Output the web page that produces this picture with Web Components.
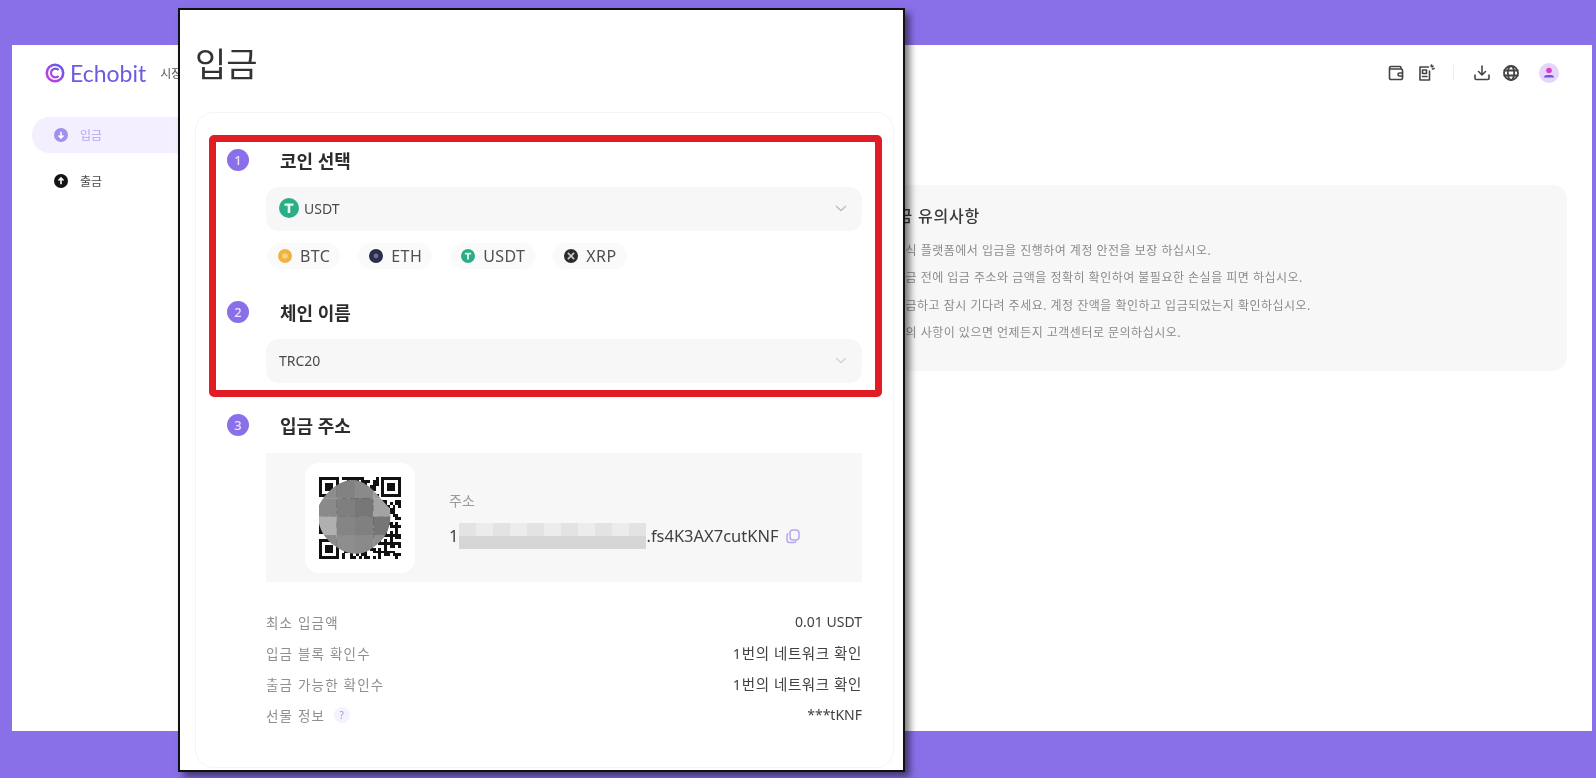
<!DOCTYPE html>
<html lang="ko">
<head>
<meta charset="utf-8">
<title>입금</title>
<style>
html, body { margin: 0; height: 100%; }
body {
	background: #8a70e8;
	font-family: "Noto Sans", "Noto Sans CJK KR", sans-serif;
	overflow: hidden;
}
</style>
</head>
<body>

<echo-page>
	<echo-header slot="header"></echo-header>
	<echo-side slot="side">
		<side-item active label="입금"></side-item>
		<side-item label="출금"></side-item>
	</echo-side>
	<notice-panel slot="main">
		<li>공식 플랫폼에서 입금을 진행하여 계정 안전을 보장 하십시오.</li>
		<li>입금 전에 입금 주소와 금액을 정확히 확인하여 불필요한 손실을 피면 하십시오.</li>
		<li>입금하고 잠시 기다려 주세요. 계정 잔액을 확인하고 입금되었는지 확인하십시오.</li>
		<li>문의 사항이 있으면 언제든지 고객센터로 문의하십시오.</li>
	</notice-panel>
</echo-page>

<deposit-window>
	<step-head num="1">코인 선택</step-head>
	<select-box arrow="#bdbdbd"><coin-icon coin="usdt" size="20"></coin-icon><span>USDT</span></select-box>
	<chip-row>
		<coin-chip coin="btc">BTC</coin-chip>
		<coin-chip coin="eth">ETH</coin-chip>
		<coin-chip coin="usdt">USDT</coin-chip>
		<coin-chip coin="xrp">XRP</coin-chip>
	</chip-row>
	<step-head num="2" style="margin-top:29px">체인 이름</step-head>
	<select-box arrow="#d4d4d4"><span>TRC20</span></select-box>
	<step-head num="3" style="margin-top:28px">입금 주소</step-head>
	<address-panel></address-panel>
	<info-list>
		<info-row label="최소 입금액">0.01 USDT</info-row>
		<info-row label="입금 블록 확인수" wide>1번의 네트워크 확인</info-row>
		<info-row label="출금 가능한 확인수" wide>1번의 네트워크 확인</info-row>
		<info-row label="선물 정보" hint>***tKNF</info-row>
	</info-list>
</deposit-window>

<script>
// page behind the window
class EchoPage extends HTMLElement {
	constructor() {
		super();
		this.attachShadow({mode: 'open'});
		this.shadowRoot.innerHTML = `
<style>
:host { display: block; box-sizing: border-box; height: 778px; padding: 45px 4px 47px 12px; }
.sheet { background: #fff; height: 100%; display: flex; flex-direction: column; filter: blur(.45px); }
.body { display: flex; flex: 1; }
.side { width: 858px; padding: 16px 0 0 20px; box-sizing: border-box; }
.main { flex: 1; padding: 84px 25px 0 0; }
</style>
<div class="sheet">
	<slot name="header"></slot>
	<div class="body">
		<div class="side"><slot name="side"></slot></div>
		<div class="main"><slot name="main"></slot></div>
	</div>
</div>`;
	}
}

class EchoHeader extends HTMLElement {
	constructor() {
		super();
		this.attachShadow({mode: 'open'});
		this.shadowRoot.innerHTML = `
<style>
:host { display: flex; align-items: center; height: 56px; padding: 0 33px; color: #555; }
.logo { display: flex; align-items: center; gap: 5px; color: #6a5be2; font: 400 23px/1 Lato, sans-serif; }
.nav { margin-left: 14px; font-size: 12px; }
.tools { margin-left: auto; display: flex; align-items: center; }
svg { display: block; }
.sep { width: 1px; height: 16px; background: #eee; margin: 0 19px 0 18px; }
.ico { fill: none; stroke: #444; stroke-width: 1.6; stroke-linecap: round; stroke-linejoin: round; }
</style>
<div class="logo">
	<svg width="20" height="20" viewBox="0 0 20 20">
		<defs><linearGradient id="lg" x1="0" y1="1" x2="1" y2="0"><stop offset="0" stop-color="#c93fe0"/><stop offset="1" stop-color="#5d5be6"/></linearGradient></defs>
		<circle cx="10" cy="10" r="8.2" fill="none" stroke="url(#lg)" stroke-width="2.6"/>
		<path d="M13.6 7A4.4 4.4 0 1 0 13.6 13" fill="none" stroke="url(#lg)" stroke-width="2.2"/>
		<path d="M7.6 10H14" stroke="url(#lg)" stroke-width="2"/>
	</svg>
	<span>Echobit</span>
</div>
<span class="nav">시장</span>
<div class="tools">
	<svg class="ico" width="18" height="18" viewBox="0 0 18 18" style="margin-right:12px"><path d="M14 5V4a1.5 1.5 0 0 0-1.500-1.500H4A1.800 1.800 0 0 0 2.500 4.500v9.500A1.500 1.500 0 0 0 4 15.500h10a1.500 1.500 0 0 0 1.500-1.500V6.500A1.500 1.500 0 0 0 14 5H2.800"/><path d="M15.500 9h-3a1.500 1.500 0 0 0 0 3h3"/></svg>
	<svg class="ico" width="18" height="18" viewBox="0 0 18 18"><path d="M11.500 3H3v13h9.500V7"/><rect x="5.500" y="6" width="4" height="3.500"/><path d="M5.500 12.500h4.500"/><path d="M14 2l.5-1M15.500 5l1.500-.6M15 3l1-1"/></svg>
	<span class="sep"></span>
	<svg class="ico" width="18" height="18" viewBox="0 0 18 18" style="margin-right:11px"><path d="M9 2v9M5.500 7.500 9 11l3.500-3.500M2 11v3.500a1 1 0 0 0 1 1h12a1 1 0 0 0 1-1V11"/></svg>
	<svg class="ico" width="18" height="18" viewBox="0 0 18 18" style="margin-right:19px;stroke-width:1.800"><circle cx="9" cy="9" r="7"/><ellipse cx="9" cy="9" rx="3.200" ry="7"/><path d="M2.300 6.500h13.400M2.300 11.500h13.400"/></svg>
	<svg width="20" height="20" viewBox="0 0 20 20"><circle cx="10" cy="10" r="10" fill="#e6d4fb"/><circle cx="10" cy="7.500" r="2.800" fill="#d63fc4"/><path d="M5 14.500a3 2.500 0 0 1 3-2.500h4a3 2.500 0 0 1 3 2.500z" fill="#6a58dd"/></svg>
</div>`;
	}
}

class EchoSide extends HTMLElement {
	constructor() {
		super();
		this.attachShadow({mode: 'open'});
		this.shadowRoot.innerHTML = `
<style>:host { display: flex; flex-direction: column; gap: 10px; width: 200px; }</style>
<slot></slot>`;
	}
}

class SideItem extends HTMLElement {
	constructor() {
		super();
		this.attachShadow({mode: 'open'});
		let on = this.hasAttribute('active');
		let arrow = on ? 'M7 3.800v6M4.500 7.500 7 10l2.500-2.500' : 'M7 10.200v-6M4.500 6.500 7 4l2.500 2.500';
		this.shadowRoot.innerHTML = `
<style>
:host { display: flex; align-items: center; height: 36px; padding-left: 22px; gap: 12px; border-radius: 18px; font-size: 12px; color: #4a4a4a; }
:host([active]) { background: #f3effe; color: #b7a4f3; }
svg { display: block; }
</style>
<svg width="14" height="14" viewBox="0 0 14 14"><circle cx="7" cy="7" r="7" fill="${on ? '#a48ef0' : '#141414'}"/><path d="${arrow}" fill="none" stroke="#fff" stroke-width="1.600"/></svg>
<span>${this.getAttribute('label')}</span>`;
	}
}

class NoticePanel extends HTMLElement {
	constructor() {
		super();
		this.attachShadow({mode: 'open'});
		this.shadowRoot.innerHTML = `
<style>
:host { display: block; box-sizing: border-box; height: 186px; padding: 19px 24px; background: #f7f7f8; border-radius: 14px; }
h3 { margin: 0 0 9px -12px; font-size: 16px; letter-spacing: .8px; font-weight: 500; line-height: 24px; color: #3a3a3a; }
::slotted(li) { list-style: none; font-size: 12px; letter-spacing: .49px; line-height: 27.300px; color: #8b8b8b; white-space: nowrap; }
</style>
<h3>입금 유의사항</h3>
<slot></slot>`;
	}
}

// the screenshot pasted over the page
class DepositWindow extends HTMLElement {
	constructor() {
		super();
		this.attachShadow({mode: 'open'});
		this.shadowRoot.innerHTML = `
<style>
:host { position: absolute; left: 178px; top: 8px; width: 727px; height: 764px; box-sizing: border-box; background: #fff; border: 2px solid #111; box-shadow: 5px 5px 7px rgba(0,0,0,.5); overflow: hidden; }
.inner { padding: 0 9px 0 15px; filter: blur(.45px); }
h1 { margin: 0; height: 102px; box-sizing: border-box; padding-top: 27px; font-size: 34px; font-weight: 400; line-height: 54px; color: #333; }
.card { position: relative; box-sizing: border-box; height: 656px; padding: 33px 31px 0 31px; border: 1px solid #f4f4f4; border-radius: 18px; }
.mark { position: absolute; left: 13px; top: 22px; width: 673px; height: 262px; box-sizing: border-box; border: 7px solid #e21c24; border-radius: 5px; pointer-events: none; }
</style>
<div class="inner">
<h1>입금</h1>
<div class="card">
	<slot></slot>
	<div class="mark"></div>
</div>
</div>`;
	}
}

class StepHead extends HTMLElement {
	constructor() {
		super();
		this.attachShadow({mode: 'open'});
		this.shadowRoot.innerHTML = `
<style>
:host { display: flex; align-items: center; gap: 31px; height: 28px; font-size: 18px; font-weight: 700; color: #2c2c2c; }
b { display: flex; align-items: center; justify-content: center; width: 22px; height: 22px; border-radius: 50%; background: #8a70e8; color: #e9e3fd; font-size: 13px; font-weight: 500; }
</style>
<b>${this.getAttribute('num')}</b><span><slot></slot></span>`;
	}
}

class SelectBox extends HTMLElement {
	constructor() {
		super();
		this.attachShadow({mode: 'open'});
		let color = this.getAttribute('arrow');
		this.shadowRoot.innerHTML = `
<style>
:host { display: flex; align-items: center; gap: 5px; height: 44px; margin: 13px 0 0 39px; padding: 0 15px 2px 13px; box-sizing: border-box; background: #f7f7f7; border-radius: 13px; font-size: 14px; color: #4a4a4a; }
svg { margin-left: auto; display: block; }
</style>
<slot></slot>
<svg width="12" height="7" viewBox="0 0 12 7"><path d="M1 1l5 4.500L11 1" fill="none" stroke="${color}" stroke-width="1.400"/></svg>`;
	}
}

class ChipRow extends HTMLElement {
	constructor() {
		super();
		this.attachShadow({mode: 'open'});
		this.shadowRoot.innerHTML = `
<style>:host { display: flex; gap: 18px; margin: 12px 0 0 40px; }</style>
<slot></slot>`;
	}
}

const COINS = {
	usdt: '<circle cx="10" cy="10" r="10" fill="#2bae87"/><path d="M5.500 5.500h9v2.300h-3.200V15H8.700V7.800H5.500z" fill="#e9f7f2"/>',
	btc: '<circle cx="10" cy="10" r="10" fill="#efb33e"/><circle cx="10" cy="10" r="4" fill="#f7d48a"/>',
	eth: '<circle cx="10" cy="10" r="10" fill="#2c2c4c"/><circle cx="10" cy="10" r="3.500" fill="#6e6e94"/>',
	xrp: '<circle cx="10" cy="10" r="10" fill="#2b2b2b"/><path d="M5.500 5.500l9 9M14.500 5.500l-9 9" stroke="#c9c9c9" stroke-width="2.400"/>'
};

class CoinIcon extends HTMLElement {
	constructor() {
		super();
		this.attachShadow({mode: 'open'});
		let size = this.getAttribute('size') || 14;
		this.shadowRoot.innerHTML = `
<style>:host { display: block; flex: none; } svg { display: block; }</style>
<svg width="${size}" height="${size}" viewBox="0 0 20 20">${COINS[this.getAttribute('coin')]}</svg>`;
	}
}

class CoinChip extends HTMLElement {
	constructor() {
		super();
		this.attachShadow({mode: 'open'});
		this.shadowRoot.innerHTML = `
<style>
:host { display: flex; align-items: center; gap: 8px; height: 26px; padding: 0 10px 0 11px; border-radius: 13px; background: #fafafa; font-size: 16px; letter-spacing: .4px; color: #4f4f4f; }
</style>
<coin-icon coin="${this.getAttribute('coin')}" size="14"></coin-icon><slot></slot>`;
	}
}

class AddressPanel extends HTMLElement {
	constructor() {
		super();
		this.attachShadow({mode: 'open'});
		this.shadowRoot.innerHTML = `
<style>
:host { display: flex; align-items: center; height: 129px; margin: 14px 0 0 39px; padding-left: 39px; background: #f7f7f7; }
.qr { width: 110px; height: 110px; background: #fff; border-radius: 14px; display: flex; align-items: center; justify-content: center; flex: none; }
svg { display: block; }
.txt { margin-left: 34px; padding-top: 5px; }
.cap { font-size: 14px; color: #9a9a9a; line-height: 18px; }
.addr { display: flex; align-items: center; margin-top: 13px; font-size: 16.500px; color: #3f3f3f; line-height: 26px; }
.smear { display: grid; grid-template-columns: repeat(11, 17px); grid-auto-rows: 13px; margin: 0 0 0 1px; }
.smear i:nth-child(odd) { background: #e3e3e3; }
.smear i:nth-child(even) { background: #ececec; }
.smear i.d { background: #d6d6d6; }
.copy { margin-left: 6px; }
</style>
<div class="qr">${this.qrSvg()}</div>
<div class="txt">
	<div class="cap">주소</div>
	<div class="addr">
		<span>1</span>
		<div class="smear">${this.smear()}</div>
		<span>.fs4K3AX7cutKNF</span>
		<svg class="copy" width="16" height="16" viewBox="0 0 16 16" fill="none" stroke="#b9a6ee" stroke-width="1.500"><rect x="5" y="2" width="9" height="10" rx="3"/><path d="M3.500 5.500A2 2 0 0 0 2 7.500V12a2.500 2.500 0 0 0 2.500 2.500H9a2 2 0 0 0 2-1.500"/></svg>
	</div>
</div>`;
	}

	smear() {
		let cells = '';
		for (let i = 0; i < 22; i++) cells += '<i' + (i > 10 ? ' class="d"' : '') + '></i>';
		return cells;
	}

	// qr modules from a small fixed sequence, the center is hidden by the mosaic anyway
	qrSvg() {
		let n = 29, m = 82 / n, out = '', seed = 17;
		let finder = (x, y) => `<path d="M${x} ${y}h7v7h-7z M${x + 1} ${y + 1}v5h5v-5z" fill-rule="evenodd"/><rect x="${x + 2}" y="${y + 2}" width="3" height="3"/>`;
		for (let y = 0; y < n; y++) {
			for (let x = 0; x < n; x++) {
				seed = (seed * 73 + 41) % 1021;
				let corner = (x < 8 && y < 8) || (x > n - 9 && y < 8) || (x < 8 && y > n - 9);
				if (!corner && seed % 2) out += `<rect x="${x}" y="${y}" width="1.050" height="1.050"/>`;
			}
		}
		let s = 18.400 / m;
		let mosaic = [
			['#8d8d8d', '#828282', '#8a8a8a', '#9c9c9c'],
			['#8a8a8a', '#7f7f7f', '#777', '#a3a3a3'],
			['#b0b0b0', '#858585', '#808080', '#767676'],
			['#8b8b8b', '#8e8e8e', '#8a8a8a', '#8e8e8e']
		];
		let cells = '';
		mosaic.forEach((row, j) => row.forEach((c, i) => {
			cells += `<rect x="${-0.3 + i * s}" y="${1 + j * s}" width="${s + .1}" height="${s + .1}" fill="${c}"/>`;
		}));
		return `<svg width="82" height="82" viewBox="0 0 ${n} ${n}" fill="#111" shape-rendering="crispEdges">
			<defs><clipPath id="blob"><path d="M11 1C17 0.500 21 7 25 11C26 17 24 22 19 25C14 29 9 27 5 24C0 20-1 15 0 10C2 6 6 2 11 1Z"/></clipPath></defs>
			${out}${finder(0, 0)}${finder(n - 7, 0)}${finder(0, n - 7)}
			<g clip-path="url(#blob)" shape-rendering="auto">${cells}</g>
		</svg>`;
	}
}

class InfoList extends HTMLElement {
	constructor() {
		super();
		this.attachShadow({mode: 'open'});
		this.shadowRoot.innerHTML = `
<style>:host { display: block; margin: 24px 0 0 39px; }</style>
<slot></slot>`;
	}
}

class InfoRow extends HTMLElement {
	constructor() {
		super();
		this.attachShadow({mode: 'open'});
		let hint = this.hasAttribute('hint') ? '<i>?</i>' : '';
		this.shadowRoot.innerHTML = `
<style>
:host { display: flex; align-items: center; justify-content: space-between; height: 31px; font-size: 14px; color: #414141; }
:host([wide]) .v { font-size: 14.500px; letter-spacing: .6px; }
.l { display: flex; align-items: center; gap: 9px; color: #8f8f8f; font-size: 13.500px; letter-spacing: 1.200px; }
i { display: flex; align-items: center; justify-content: center; width: 16px; height: 16px; border-radius: 50%; background: #f4f2fd; color: #a795ef; font-size: 10px; font-style: normal; }
</style>
<span class="l">${this.getAttribute('label')}${hint}</span><span class="v"><slot></slot></span>`;
	}
}

window.customElements.define('coin-icon', CoinIcon);
window.customElements.define('echo-page', EchoPage);
window.customElements.define('echo-header', EchoHeader);
window.customElements.define('echo-side', EchoSide);
window.customElements.define('side-item', SideItem);
window.customElements.define('notice-panel', NoticePanel);
window.customElements.define('deposit-window', DepositWindow);
window.customElements.define('step-head', StepHead);
window.customElements.define('select-box', SelectBox);
window.customElements.define('chip-row', ChipRow);
window.customElements.define('coin-chip', CoinChip);
window.customElements.define('address-panel', AddressPanel);
window.customElements.define('info-list', InfoList);
window.customElements.define('info-row', InfoRow);
</script>
</body>
</html>
